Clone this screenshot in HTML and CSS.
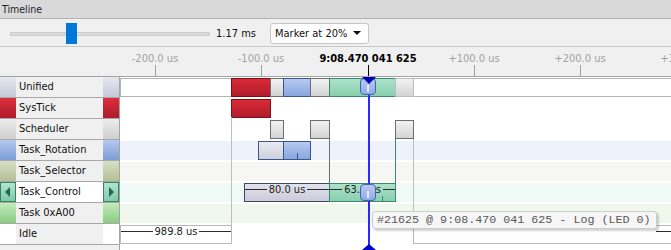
FILE: index.html
```html
<!DOCTYPE html>
<html>
<head>
<meta charset="utf-8">
<link rel="stylesheet" href="styles.css">
</head>
<body>
<div class="panel">
  <div class="title">Timeline</div>
  <div class="toolbar">
    <div class="slider"><div class="track"></div><div class="thumb"></div></div>
    <span class="zoom-val">1.17 ms</span>
    <div class="select"><span>Marker at 20%</span><span class="caret"></span></div>
  </div>
  <div class="ruler">
    <div class="tick" style="left:155px"><span class="tlabel">-200.0 us</span></div>
    <div class="tick" style="left:261px"><span class="tlabel">-100.0 us</span></div>
    <div class="tick now" style="left:368px"><span class="tlabel">9:08.470 041 625</span></div>
    <div class="tick" style="left:474px"><span class="tlabel">+100.0 us</span></div>
    <div class="tick" style="left:580px"><span class="tlabel">+200.0 us</span></div>
    <div class="tick" style="left:686px"><span class="tlabel">+300.0 us</span></div>
  </div>
  <div class="body">
    <div class="labels">
      <div class="lrow"><span class="blk c-unified"></span><span class="name">Unified</span><span class="blk c-unified"></span></div>
      <div class="lrow"><span class="blk c-systick"></span><span class="name">SysTick</span><span class="blk c-systick"></span></div>
      <div class="lrow"><span class="blk c-sched"></span><span class="name">Scheduler</span><span class="blk c-sched"></span></div>
      <div class="lrow"><span class="blk c-rot"></span><span class="name">Task_Rotation</span><span class="blk c-rot"></span></div>
      <div class="lrow"><span class="blk c-sel"></span><span class="name">Task_Selector</span><span class="blk c-sel"></span></div>
      <div class="lrow active"><span class="blk c-ctrl arrow-l"></span><span class="name">Task_Control</span><span class="blk c-ctrl arrow-r"></span></div>
      <div class="lrow"><span class="blk c-a00"></span><span class="name">Task 0xA00</span><span class="blk c-a00"></span></div>
      <div class="lrow"><span class="blk c-idle"></span><span class="name">Idle</span><span class="blk c-idle"></span></div>
    </div>
    <div class="tracks">
      <div class="trow">
        <div class="band b-unified"></div>
        <div class="bar red" style="left:111px;width:40px"></div>
        <div class="bar gray" style="left:150px;width:14px"></div>
        <div class="bar blue" style="left:163px;width:28px"></div>
        <div class="bar gray" style="left:190px;width:20px"></div>
        <div class="bar green" style="left:209px;width:67px"></div>
        <div class="bar gray light" style="left:275px;width:19px"></div>
      </div>
      <div class="trow">
        <div class="band"></div>
        <div class="bar red" style="left:111px;width:40px"></div>
      </div>
      <div class="trow">
        <div class="band"></div>
        <div class="bar gray" style="left:150px;width:14px"></div>
        <div class="bar gray" style="left:190px;width:20px"></div>
        <div class="bar gray" style="left:275px;width:19px"></div>
      </div>
      <div class="trow">
        <div class="band b-rot"></div>
        <div class="bar rgray" style="left:138px;width:26px"></div>
        <div class="bar blue" style="left:163px;width:28px"><span class="mark" style="left:13px"></span></div>
      </div>
      <div class="trow">
        <div class="band b-sel"></div>
      </div>
      <div class="trow">
        <div class="band b-ctrl"></div>
        <div class="bar cgray labeled" style="left:124px;width:86px"><span>80.0 us</span></div>
        <div class="bar green labeled" style="left:209px;width:67px"><span>63.0 us</span><span class="mark g" style="left:52px"></span></div>
      </div>
      <div class="trow">
        <div class="band b-a00"></div>
      </div>
      <div class="trow">
        <div class="band"></div>
        <div class="bar idle labeled" style="left:0px;width:112px"><span>989.8 us</span></div>
        <div class="bar idle open" style="left:293px;width:420px"></div>
      </div>

      <div class="vline lgray" style="left:111px;top:40px;height:108px"></div>
      <div class="vline dgray" style="left:209px;top:62px;height:44px"></div>
      <div class="vline teal" style="left:275px;top:62px;height:44px"></div>
      <div class="vline lgray" style="left:293px;top:62px;height:86px"></div>

      <div class="cursor"></div>
      <div class="handle" style="left:240px;top:1px"></div>
      <div class="handle" style="left:240px;top:107px"></div>
      <div class="cur-top"></div>
      <div class="cur-bot"></div>

      <div class="tooltip">#21625 @ 9:08.470 041 625 - Log (LED 0)</div>
    </div>
  </div>
</div>
</body>
</html>
```
FILE: styles.css
```css
* { box-sizing: border-box; }
html, body { margin: 0; padding: 0; }
body {
  width: 671px;
  height: 250px;
  overflow: hidden;
  background: #ffffff;
  font-family: "DejaVu Sans Condensed", "DejaVu Sans", sans-serif;
  font-stretch: condensed;
  font-size: 11px;
  color: #111;
}
.panel { width: 671px; height: 250px; overflow: hidden; }

.title {
  height: 19px;
  background: #d9d9d9;
  border-bottom: 1px solid #b2b2b2;
  padding-left: 2px;
  font-size: 10.5px;
  line-height: 18px;
  color: #1c1c2c;
}

.toolbar {
  height: 28px;
  background: #f0f0f0;
  border-bottom: 1px solid #c8c8c8;
  display: flex;
  align-items: center;
  padding-left: 10px;
}
.slider {
  position: relative;
  width: 200px;
  height: 21px;
  display: flex;
  align-items: center;
  margin-top: 2px;
}
.track {
  width: 100%;
  height: 4px;
  background: #dcdcdc;
  border: 1px solid #cdcdcd;
}
.thumb {
  position: absolute;
  left: 56px;
  top: 0;
  width: 11px;
  height: 21px;
  background: #0078d7;
}
.zoom-val {
  width: 54px;
  margin-left: 6px;
  margin-top: 2px;
  color: #111;
}
.select {
  width: 99px;
  height: 21px;
  margin-top: 1px;
  background: #fff;
  border: 1px solid #c6c6c6;
  border-radius: 3px;
  display: flex;
  align-items: center;
  justify-content: space-between;
  padding: 0 7px 0 4px;
}
.caret {
  width: 0;
  height: 0;
  border-left: 4px solid transparent;
  border-right: 4px solid transparent;
  border-top: 4px solid #111;
}

.ruler {
  position: relative;
  height: 30px;
  background: #f0f0f0;
  border-bottom: 1px solid #a4a4a4;
  overflow: hidden;
}
.tick {
  position: absolute;
  top: 0;
  bottom: 0;
  width: 1px;
}
.tick::after {
  content: "";
  position: absolute;
  left: 0;
  bottom: 0;
  width: 1px;
  height: 11px;
  background: #a0a0a0;
}
.tick.now::after { background: #000; }
.tlabel {
  position: absolute;
  top: 5px;
  left: 0;
  transform: translateX(-50%);
  white-space: nowrap;
  line-height: 13px;
  color: #a2a2a2;
}
.tick.now .tlabel { color: #000; font-weight: bold; }

.body {
  display: flex;
  height: 173px;
}
.labels {
  width: 120px;
  flex: none;
  background: #f0f0f0;
  border-right: 1px solid #a4a4a4;
}
.lrow {
  height: 21px;
  border-bottom: 1px solid #a8a8a8;
  display: grid;
  grid-template-columns: 16px 1fr 16px;
}
.lrow .name {
  padding-left: 3px;
  line-height: 20px;
  background: #f0f0f0;
  color: #111;
  white-space: nowrap;
}
.lrow.active .name { background: #ffffff; }
.blk { position: relative; }
.c-unified { background: linear-gradient(#e6e8ef, #c5c9d7); }
.c-systick { background: linear-gradient(#dc2e3c, #b01c2a); }
.c-sched { background: linear-gradient(#ececec, #cfcfcf); }
.c-rot { background: linear-gradient(#b6c9ee, #7c9dd8); }
.c-sel { background: linear-gradient(#d8dfc6, #b3bf96); }
.c-ctrl {
  background: linear-gradient(#b4e4d0, #82c9aa);
  border: 1px solid #358468;
}
.c-a00 { background: linear-gradient(#c4eabc, #8acd82); }
.c-idle { background: #ffffff; }
.arrow-l::after, .arrow-r::after {
  content: "";
  position: absolute;
  top: 4px;
  width: 0;
  height: 0;
  border-top: 5px solid transparent;
  border-bottom: 5px solid transparent;
}
.arrow-l::after { left: 4px; border-right: 5px solid #1f6a4e; }
.arrow-r::after { left: 5px; border-left: 5px solid #1f6a4e; }

.tracks {
  flex: 1;
  position: relative;
  overflow: hidden;
  background: #ffffff;
}
.trow {
  position: relative;
  height: 21px;
  padding-top: 1px;
}
.band { height: 19px; }
.b-unified {
  border: 1px solid #b4b4b4;
  border-right: none;
  background: #fff;
}
.b-rot { background: #eef2fb; }
.b-sel { background: #f6f7f2; }
.b-ctrl { background: #eff9f5; }
.b-a00 { background: #f0f8ee; }

.bar {
  position: absolute;
  top: 1px;
  height: 19px;
  border: 1px solid #6c6c6c;
}
.bar.red { background: linear-gradient(#dc2a38, #b01c2a); border-color: #7c1019; }
.bar.gray { background: linear-gradient(#f2f2f2, #d4d4d4); border-color: #6e6e6e; }
.bar.gray.light { border-color: #bcbcbc; }
.bar.blue { background: linear-gradient(#b7caf1, #87a6df); border-color: #3c5590; }
.bar.green { background: linear-gradient(#ace2ca, #88d0b0); border-color: #3a8a6e; }
.bar.rgray { background: linear-gradient(#eaebf1, #cdd1dd); border-color: #3c5590; }
.bar.cgray { background: linear-gradient(#e2e2ec, #cbccd8); border-color: #3e4868; }
.bar.idle { background: #ffffff; border-color: #b8b8b8; }
.bar.open::after {
  content: "";
  position: absolute;
  left: 242px;
  right: 0;
  top: 5px;
  height: 1px;
  background: #2c2c2c;
}
.bar.labeled {
  display: flex;
  align-items: center;
  padding-bottom: 6px;
  line-height: 1;
  color: #222;
  white-space: nowrap;
}
.bar.labeled::before, .bar.labeled::after {
  content: "";
  flex: 1;
  height: 1px;
  background: #2c2c2c;
}
.bar.labeled > span { padding: 0 2px; }
.mark {
  position: absolute;
  bottom: 0;
  width: 1px;
  height: 6px;
  background: #3c5590;
  padding: 0 !important;
}
.mark.g { background: #3a8a6e; height: 5px; }

.vline { position: absolute; width: 1px; }
.vline.lgray { background: #bdbdbd; }
.vline.dgray { background: #6c6c6c; }
.vline.teal { background: #3a8a6e; }

.cursor {
  position: absolute;
  left: 248px;
  top: 0;
  bottom: 0;
  width: 2px;
  background: #2a2aff;
}
.handle {
  position: absolute;
  width: 16px;
  height: 17px;
  border: 1px solid #4462b2;
  border-radius: 4px;
  background: linear-gradient(#b9c9f1, #93abe6);
}
.handle::after {
  content: "";
  position: absolute;
  left: 6px;
  top: 6px;
  bottom: 2px;
  width: 2px;
  background: #e4eaff;
}
.cur-top, .cur-bot {
  position: absolute;
  left: 242px;
  width: 0;
  height: 0;
  border-left: 7px solid transparent;
  border-right: 7px solid transparent;
}
.cur-top { top: 0; border-top: 7px solid #0000b8; }
.cur-bot { bottom: 0; border-bottom: 6px solid #0000d0; }

.tooltip {
  position: absolute;
  left: 252px;
  top: 134px;
  width: 285px;
  height: 18px;
  background: #f6f6f6;
  border: 1px solid #cdcdcd;
  border-radius: 3px;
  box-shadow: 2px 2px 2px rgba(0, 0, 0, 0.18);
  padding-left: 4px;
  font-family: "Liberation Mono", monospace;
  font-size: 11.7px;
  line-height: 16px;
  color: #585858;
  white-space: nowrap;
}
```
